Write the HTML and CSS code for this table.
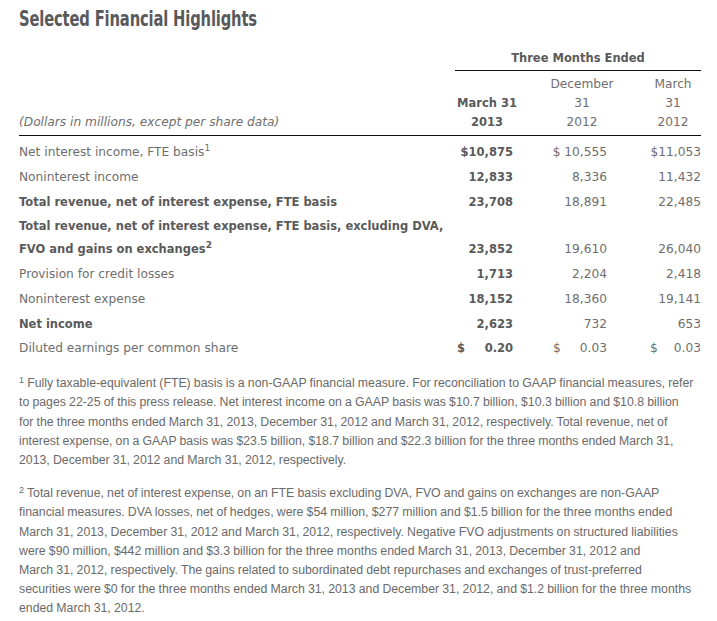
FILE: index.html
```html
<!DOCTYPE html>
<html lang="en">
<head>
<meta charset="utf-8">
<title>Selected Financial Highlights</title>
<link rel="stylesheet" href="styles.css">
</head>
<body>
<div class="page">
  <h1 class="title"><span class="title-text">Selected Financial Highlights</span></h1>
  <table class="fin">
    <colgroup>
      <col class="c-label"><col class="c-a"><col class="c-b"><col class="c-c">
    </colgroup>
    <thead>
      <tr class="h-top">
        <th></th>
        <th colspan="3" class="period">Three Months Ended</th>
      </tr>
      <tr class="h-dates">
        <th class="units">(Dollars in millions, except per share data)</th>
        <th class="d-a">March 31<br>2013</th>
        <th class="d-b">December<br>31<br>2012</th>
        <th class="d-c">March<br>31<br>2012</th>
      </tr>
    </thead>
    <tbody>
      <tr class="first">
        <td class="lbl">Net interest income, FTE basis<sup class="fn">1</sup></td>
        <td class="v-a">$10,875</td>
        <td class="v-b">$ 10,555</td>
        <td class="v-c">$11,053</td>
      </tr>
      <tr>
        <td class="lbl">Noninterest income</td>
        <td class="v-a">12,833</td>
        <td class="v-b">8,336</td>
        <td class="v-c">11,432</td>
      </tr>
      <tr class="strong">
        <td class="lbl">Total revenue, net of interest expense, FTE basis</td>
        <td class="v-a">23,708</td>
        <td class="v-b">18,891</td>
        <td class="v-c">22,485</td>
      </tr>
      <tr class="strong">
        <td class="lbl">Total revenue, net of interest expense, FTE basis, excluding DVA,<br>FVO and gains on exchanges<sup class="fn">2</sup></td>
        <td class="v-a">23,852</td>
        <td class="v-b">19,610</td>
        <td class="v-c">26,040</td>
      </tr>
      <tr>
        <td class="lbl">Provision for credit losses</td>
        <td class="v-a">1,713</td>
        <td class="v-b">2,204</td>
        <td class="v-c">2,418</td>
      </tr>
      <tr>
        <td class="lbl">Noninterest expense</td>
        <td class="v-a">18,152</td>
        <td class="v-b">18,360</td>
        <td class="v-c">19,141</td>
      </tr>
      <tr class="strong">
        <td class="lbl">Net income</td>
        <td class="v-a">2,623</td>
        <td class="v-b">732</td>
        <td class="v-c">653</td>
      </tr>
      <tr class="last">
        <td class="lbl">Diluted earnings per common share</td>
        <td class="v-a"><div class="split"><span>$</span><span>0.20</span></div></td>
        <td class="v-b"><div class="split"><span>$</span><span>0.03</span></div></td>
        <td class="v-c"><div class="split"><span>$</span><span>0.03</span></div></td>
      </tr>
    </tbody>
  </table>
  <div class="notes">
    <p><sup>1</sup> Fully taxable-equivalent (FTE) basis is a non-GAAP financial measure. For reconciliation to GAAP financial measures, refer to pages 22-25 of this press release. Net interest income on a GAAP basis was $10.7 billion, $10.3 billion and $10.8 billion for the three months ended March&nbsp;31, 2013, December&nbsp;31, 2012 and March&nbsp;31, 2012, respectively. Total revenue, net of interest expense, on a GAAP basis was $23.5 billion, $18.7 billion and $22.3 billion for the three months ended March&nbsp;31, 2013, December&nbsp;31, 2012 and March&nbsp;31, 2012, respectively.</p>
    <p><sup>2</sup> Total revenue, net of interest expense, on an FTE basis excluding DVA, FVO and gains on exchanges are non-GAAP financial measures. DVA losses, net of hedges, were $54 million, $277 million and $1.5 billion for the three months ended March&nbsp;31, 2013, December&nbsp;31, 2012 and March&nbsp;31, 2012, respectively. Negative FVO adjustments on structured liabilities were $90 million, $442 million and $3.3 billion for the three months ended March&nbsp;31, 2013, December&nbsp;31, 2012 and March&nbsp;31, 2012, respectively. The gains related to subordinated debt repurchases and exchanges of trust-preferred securities were $0 for the three months ended March&nbsp;31, 2013 and December&nbsp;31, 2012, and $1.2 billion for the three months ended March&nbsp;31, 2012.</p>
  </div>
</div>
</body>
</html>
```

FILE: styles.css
```css
html, body {
  margin: 0;
  padding: 0;
  background: #ffffff;
}

.page {
  width: 682px;
  padding: 5px 0 0 19px;
}

.title {
  margin: 0;
  font-family: "DejaVu Sans Condensed", "DejaVu Sans", sans-serif;
  font-stretch: condensed;
  font-weight: bold;
  font-size: 21px;
  line-height: 28px;
  color: #58595b;
  white-space: nowrap;
}

.title-text {
  display: inline-block;
  transform: scaleX(0.78);
  transform-origin: 0 50%;
  letter-spacing: -0.2px;
}

.fin {
  width: 682px;
  margin-top: 15px;
  border-collapse: collapse;
  table-layout: fixed;
  font-family: "DejaVu Sans", Verdana, sans-serif;
  font-size: 12.2px;
  color: #6e6e6e;
}

.c-label { width: 436px; }
.c-a { width: 64px; }
.c-b { width: 126px; }
.c-c { width: 56px; }

.fin th, .fin td {
  padding: 0;
}

.h-top th {
  line-height: 19px;
  padding: 1px 0 2px;
}

.period {
  text-align: center;
  font-weight: bold;
  font-size: 11.5px;
  color: #5a5a5a;
  border-bottom: 1px solid #111;
}

.h-dates th {
  line-height: 19px;
  padding: 4px 0 3px;
  vertical-align: bottom;
  text-align: center;
  font-weight: normal;
  border-bottom: 1px solid #111;
}

.h-dates .units {
  text-align: left;
  font-style: italic;
}

.h-dates .d-a {
  font-weight: bold;
  font-size: 11.5px;
  color: #5a5a5a;
}

.fin tbody td {
  line-height: 22.8px;
  padding: 1px 0;
  vertical-align: bottom;
  white-space: nowrap;
}

.fin tbody tr.first td {
  padding-top: 5px;
}

.fin tbody tr.last td {
  padding-bottom: 3px;
}

.fin tbody tr.strong .lbl {
  font-weight: bold;
  font-size: 11.5px;
  color: #5a5a5a;
}

.v-a {
  text-align: right;
  font-weight: bold;
  font-size: 11.5px;
  color: #5a5a5a;
  padding-right: 6px !important;
}

.v-a .split {
  padding-left: 2px;
}

.v-b {
  text-align: right;
  padding-right: 38px !important;
}

.v-b .split {
  padding-left: 34px;
}

.v-c {
  text-align: right;
}

.v-c .split {
  padding-left: 5px;
}

.split {
  display: flex;
  justify-content: space-between;
}

.fn {
  font-size: 9px;
  line-height: 0;
  vertical-align: 5px;
}

.notes {
  width: 674.5px;
  margin-top: 11px;
  font-family: "Liberation Sans", Arial, sans-serif;
  font-size: 12.3px;
  word-spacing: -0.25px;
  line-height: 19.2px;
  color: #6a6a6a;
}

.notes p {
  margin: 0 0 14px;
}

.notes sup {
  font-size: 9px;
  line-height: 0;
  vertical-align: 4px;
}
```
